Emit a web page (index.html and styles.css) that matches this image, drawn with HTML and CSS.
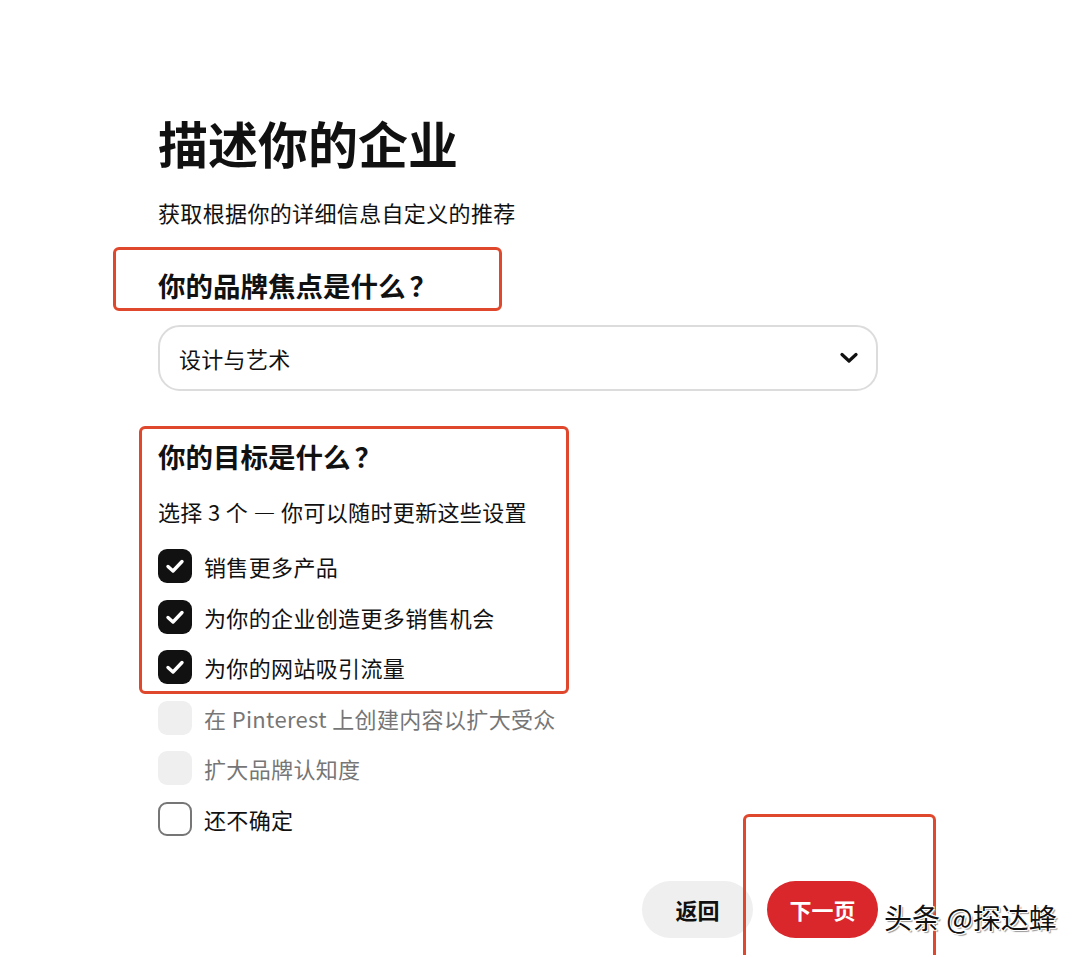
FILE: index.html
```html
<!DOCTYPE html>
<html lang="zh-CN">
<head>
    <meta charset="UTF-8">
    <title>描述你的企业</title>
    <link rel="stylesheet" href="styles.css">
</head>
<body>
    <div class="page">
        <!-- 标题 -->
        <h1 class="title">描述你的企业</h1>
        <p class="subtitle">获取根据你的详细信息自定义的推荐</p>

        <!-- 品牌焦点 -->
        <h2 class="question">你的品牌焦点是什么<span class="qm">？</span></h2>
        <div class="select">
            <span>设计与艺术</span>
            <svg class="chevron" width="18" height="12" viewBox="0 0 18 12">
                <path d="M2 2.5 L9 9 L16 2.5" fill="none" stroke="#111" stroke-width="3.2" stroke-linecap="round" stroke-linejoin="round"/>
            </svg>
        </div>

        <!-- 目标 -->
        <h2 class="question goals">你的目标是什么<span class="qm">？</span></h2>
        <p class="hint">选择 3 个 — 你可以随时更新这些设置</p>

        <div class="options">
            <div class="option">
                <span class="box checked"><svg width="20" height="16" viewBox="0 0 20 16"><path d="M3 8.5 L8 13 L17 3.5" fill="none" stroke="#fff" stroke-width="3.4" stroke-linecap="round" stroke-linejoin="round"/></svg></span>
                <span>销售更多产品</span>
            </div>
            <div class="option">
                <span class="box checked"><svg width="20" height="16" viewBox="0 0 20 16"><path d="M3 8.5 L8 13 L17 3.5" fill="none" stroke="#fff" stroke-width="3.4" stroke-linecap="round" stroke-linejoin="round"/></svg></span>
                <span>为你的企业创造更多销售机会</span>
            </div>
            <div class="option">
                <span class="box checked"><svg width="20" height="16" viewBox="0 0 20 16"><path d="M3 8.5 L8 13 L17 3.5" fill="none" stroke="#fff" stroke-width="3.4" stroke-linecap="round" stroke-linejoin="round"/></svg></span>
                <span>为你的网站吸引流量</span>
            </div>
            <div class="option disabled">
                <span class="box"></span>
                <span>在 Pinterest 上创建内容以扩大受众</span>
            </div>
            <div class="option disabled">
                <span class="box"></span>
                <span>扩大品牌认知度</span>
            </div>
            <div class="option">
                <span class="box empty"></span>
                <span>还不确定</span>
            </div>
        </div>

        <!-- 按钮 -->
        <div class="actions">
            <button class="btn back">返回</button>
            <button class="btn next">下一页</button>
        </div>

        <!-- 标注框 -->
        <div class="mark mark-brand"></div>
        <div class="mark mark-goals"></div>
        <div class="mark mark-next"></div>
        <div class="watermark">头条 @探达蜂</div>
    </div>
</body>
</html>
```

FILE: styles.css
```css
/* 基础样式 */
html, body {
    margin: 0;
    padding: 0;
    background: #fff;
    color: #111;
    font-family: "Noto Sans CJK SC", "Noto Sans", sans-serif;
    overflow: hidden;
}
.page {
    position: relative;
    width: 720px;
    height: 843px;
    padding: 112px 0 0 158px;
}
.title {
    margin: 0;
    font-size: 50px;
    line-height: 60px;
    font-weight: 700;
}
.subtitle {
    margin: 25px 0 0;
    font-size: 22px;
    line-height: 30px;
    letter-spacing: 0.35px;
}
.question {
    margin: 40px 0 0;
    font-size: 27.5px;
    line-height: 36px;
    font-weight: 700;
}
.qm { margin-left: 4px; }
/* 下拉框 */
.select {
    margin-top: 22px;
    height: 62px;
    border: 2px solid #dcdcdc;
    border-radius: 22px;
    display: flex;
    align-items: center;
    justify-content: space-between;
    padding: 0 18px 0 19px;
    font-size: 22px;
    letter-spacing: 0.3px;
}
.goals { margin-top: 47px; }
.hint {
    margin: 22px 0 0;
    font-size: 22px;
    line-height: 30px;
    letter-spacing: 0.35px;
}
/* 复选项 */
.options {
    margin-top: 23px;
    display: flex;
    flex-direction: column;
    gap: 16.6px;
}
.option {
    display: flex;
    align-items: center;
    gap: 12px;
    height: 34px;
    font-size: 22px;
    letter-spacing: 0.35px;
}
.box {
    width: 34px;
    height: 34px;
    border-radius: 9px;
    box-sizing: border-box;
    display: flex;
    align-items: center;
    justify-content: center;
    background: #efefef;
}
.box.checked { background: #111; }
.box.empty {
    background: #fff;
    border: 2px solid #767676;
}
.option.disabled { color: #767676; }
/* 按钮 */
.actions {
    margin-top: 45px;
    display: flex;
    justify-content: flex-end;
    gap: 14px;
}
.btn {
    width: 111px;
    height: 57px;
    border: none;
    border-radius: 29px;
    font-family: inherit;
    font-size: 22px;
    font-weight: 700;
}
.back { background: #efefef; color: #111; }
.next { background: #d9272b; color: #fff; }
/* 红色标注框 */
.mark {
    position: absolute;
    border: 3px solid #e0482d;
    border-radius: 6px;
}
.mark-brand { left: 113px; top: 247px; width: 383px; height: 58px; }
.mark-goals { left: 139px; top: 426px; width: 424px; height: 262px; }
.mark-next { left: 743px; top: 814px; width: 187px; height: 170px; }
.watermark {
    position: absolute;
    left: 884px;
    top: 897px;
    font-size: 28px;
    line-height: 40px;
    color: #111;
    white-space: nowrap;
    text-shadow: 1px 1px 0 #fff, -1px -1px 0 #fff, 1px -1px 0 #fff, -1px 1px 0 #fff, 2px 2px 1px #999;
}
```
